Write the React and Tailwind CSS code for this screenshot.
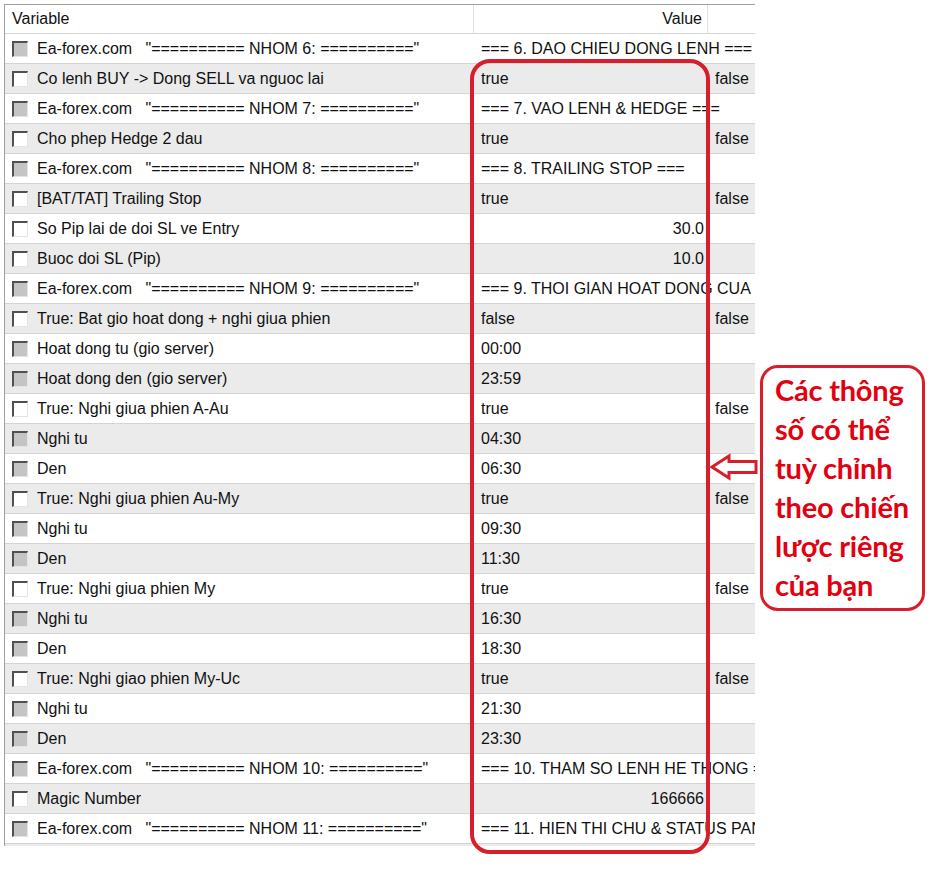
import React from "react";

const rows = [
  { g: true, name: 'Ea-forex.com   "========== NHOM 6: =========="', value: "=== 6. DAO CHIEU DONG LENH ===" },
  { g: false, name: "Co lenh BUY -> Dong SELL va nguoc lai", value: "true", extra: "false" },
  { g: true, name: 'Ea-forex.com   "========== NHOM 7: =========="', value: "=== 7. VAO LENH & HEDGE ===" },
  { g: false, name: "Cho phep Hedge 2 dau", value: "true", extra: "false" },
  { g: true, name: 'Ea-forex.com   "========== NHOM 8: =========="', value: "=== 8. TRAILING STOP ===" },
  { g: false, name: "[BAT/TAT] Trailing Stop", value: "true", extra: "false" },
  { g: false, name: "So Pip lai de doi SL ve Entry", value: "30.0", right: true },
  { g: false, name: "Buoc doi SL (Pip)", value: "10.0", right: true },
  { g: true, name: 'Ea-forex.com   "========== NHOM 9: =========="', value: "=== 9. THOI GIAN HOAT DONG CUA EA ===" },
  { g: false, name: "True: Bat gio hoat dong + nghi giua phien", value: "false", extra: "false" },
  { g: true, name: "Hoat dong tu (gio server)", value: "00:00" },
  { g: true, name: "Hoat dong den (gio server)", value: "23:59" },
  { g: false, name: "True: Nghi giua phien A-Au", value: "true", extra: "false" },
  { g: true, name: "Nghi tu", value: "04:30" },
  { g: true, name: "Den", value: "06:30" },
  { g: false, name: "True: Nghi giua phien Au-My", value: "true", extra: "false" },
  { g: true, name: "Nghi tu", value: "09:30" },
  { g: true, name: "Den", value: "11:30" },
  { g: false, name: "True: Nghi giua phien My", value: "true", extra: "false" },
  { g: true, name: "Nghi tu", value: "16:30" },
  { g: true, name: "Den", value: "18:30" },
  { g: false, name: "True: Nghi giao phien My-Uc", value: "true", extra: "false" },
  { g: true, name: "Nghi tu", value: "21:30" },
  { g: true, name: "Den", value: "23:30" },
  { g: true, name: 'Ea-forex.com   "========== NHOM 10: =========="', value: "=== 10. THAM SO LENH HE THONG ===" },
  { g: false, name: "Magic Number", value: "166666", right: true },
  { g: true, name: 'Ea-forex.com   "========== NHOM 11: =========="', value: "=== 11. HIEN THI CHU & STATUS PANEL ===" },
];

function Check({ gray }) {
  return (
    <span
      className={`block w-[16px] h-[16px] shrink-0 border-t-2 border-l-2 border-r border-b border-t-[#505050] border-l-[#505050] border-r-[#e4e4e4] border-b-[#e4e4e4] ${
        gray ? "bg-[#c4c4c4]" : "bg-white"
      }`}
    />
  );
}

export default function App() {
  return (
    <div className="relative w-[945px] h-[874px] bg-white overflow-hidden font-['Liberation_Sans',Arial,sans-serif] text-[16px] text-[#111]">
      {/* Parameter table */}
      <div className="pt-[4px] pl-[4px]">
        <div className="w-[751px] border-l border-t border-[#a0a0a0] overflow-hidden">
          {/* Header */}
          <div className="flex h-[28px] items-center bg-white">
            <div className="w-[469px] h-full flex items-center pl-[7px] border-r border-[#e0e0e0]">Variable</div>
            <div className="w-[234px] h-full flex items-center justify-end pr-[5px] border-r border-[#e0e0e0]">Value</div>
            <div className="flex-1" />
          </div>

          {rows.map((r, i) => (
            <div
              key={i}
              className={`flex h-[30px] items-center border-t border-[#d4d4d4] whitespace-pre ${
                i % 2 === 1 ? "bg-[#ebebeb]" : "bg-white"
              }`}
            >
              <div className="w-[470px] shrink-0 flex items-center pl-[7px] gap-[9px] overflow-hidden">
                <Check gray={r.g} />
                <span>{r.name}</span>
              </div>
              {r.extra || r.right ? (
                <>
                  <div className={`w-[234px] shrink-0 pl-[6px] pr-[5px] overflow-hidden ${r.right ? "text-right" : ""}`}>
                    {r.value}
                  </div>
                  <div className="pl-[6px]">{r.extra}</div>
                </>
              ) : (
                <div className="pl-[6px]">{r.value}</div>
              )}
            </div>
          ))}
          <div className="h-[3px] border-t border-[#d4d4d4] bg-[#ebebeb]" />
        </div>
      </div>

      {/* Highlight around values column */}
      <div className="absolute left-[470px] top-[59px] w-[240px] h-[795px] border-4 border-[#d71f2b] rounded-[20px]" />

      {/* Arrow */}
      <svg className="absolute left-[709px] top-[453px]" width="50" height="28" viewBox="0 0 50 28">
        <path
          d="M3 14 L20 3 L20 8.5 L47 8.5 L47 19.5 L20 19.5 L20 25 Z"
          fill="white"
          stroke="#d71f2b"
          strokeWidth="3"
          strokeLinejoin="miter"
        />
      </svg>

      {/* Note */}
      <div className="absolute left-[760px] top-[365px] w-[165px] h-[246px] border-[3px] border-[#d71f2b] rounded-[18px] bg-white pl-[12px] pt-[2px]">
        <p className="font-['Lato',sans-serif] font-bold text-[29px] leading-[39px] tracking-[-0.2px] text-[#e3000f] whitespace-nowrap">
          Các thông
          <br />
          số có thể
          <br />
          tuỳ chỉnh
          <br />
          theo chiến
          <br />
          lược riêng
          <br />
          của bạn
        </p>
      </div>
    </div>
  );
}
